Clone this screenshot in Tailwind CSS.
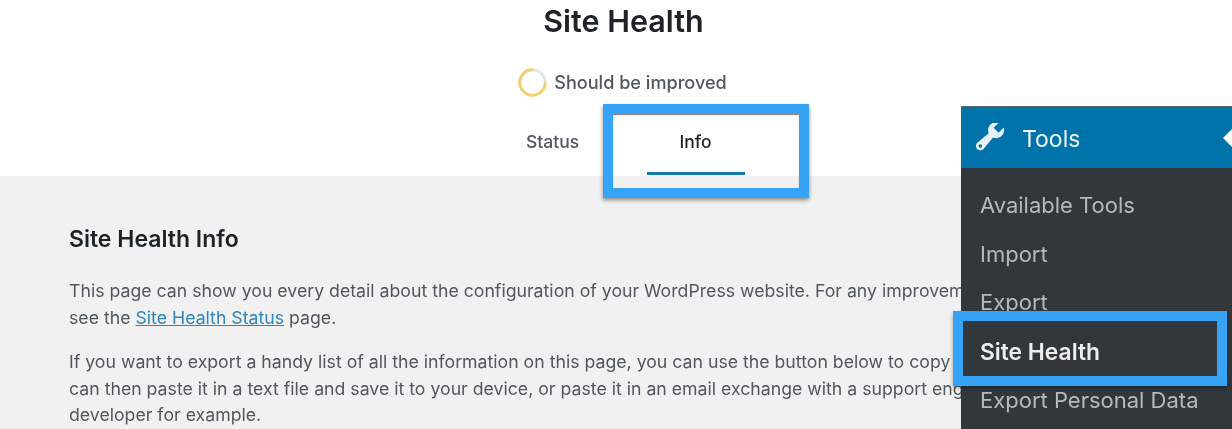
<!DOCTYPE html>
<html lang="en">
<head>
    <meta charset="UTF-8">
    <title>Site Health</title>
    <script src="https://cdn.jsdelivr.net/npm/@tailwindcss/browser@4"></script>
</head>
<body class="bg-white">
    <div class="relative w-[1232px] h-[429px] overflow-hidden font-['Inter',sans-serif] blur-[0.6px]">
        <!-- Header -->
        <header class="h-[176px] bg-white flex flex-col items-center pl-[15px]">
            <h1 class="mt-[2px] text-[30.5px] leading-[38px] font-semibold text-[#1d2327]">Site Health</h1>
            <div class="mt-[28px] ml-[-2px] flex items-center gap-[7px]">
                <svg class="w-[29px] h-[29px]" viewBox="0 0 29 29">
                    <circle cx="14.5" cy="14.5" r="12.7" fill="none" stroke="#e2e2e2" stroke-width="2.4"/>
                    <circle cx="14.5" cy="14.5" r="12.7" fill="none" stroke="#f6cf6a" stroke-width="3" stroke-dasharray="60 80"/>
                </svg>
                <span class="text-[18.1px] font-medium text-[#50575e]">Should be improved</span>
            </div>
            <nav class="mt-[26px] flex gap-[21px] ml-[-23px]">
                <a class="w-[146px] h-[52px] pt-[7px] text-center text-[17.5px] leading-[24px] font-medium text-[#50575e]">Status</a>
                <a class="w-[98px] h-[52px] pt-[7px] text-center text-[17.5px] leading-[24px] font-medium text-[#1d2327] border-b-[3px] border-[#0f78ae]">Info</a>
            </nav>
        </header>

        <!-- Content -->
        <main class="h-[253px] bg-[#f1f1f1] pl-[69px] pt-[48px] text-[17.7px] leading-[26.5px] text-[#50575e] whitespace-nowrap">
            <h2 class="text-[23px] leading-[30px] font-semibold text-[#1d2327]">Site Health Info</h2>
            <p class="mt-[24px] w-[892px] overflow-hidden">This page can show you every detail about the configuration of your WordPress website. For any improvements,<br>see the <a class="text-[#2f86bd] underline">Site Health Status</a> page.</p>
            <p class="mt-[18px] w-[892px] overflow-hidden">If you want to export a handy list of all the information on this page, you can use the button below to copy it. You<br>can then paste it in a text file and save it to your device, or paste it in an email exchange with a support engineer or<br>developer for example.</p>
        </main>

        <!-- Highlight round the Info tab -->
        <div class="absolute left-[603px] top-[104px] w-[206px] h-[94px] border-[10px] border-[#36a3f7] shadow-[0_2px_4px_rgba(0,0,0,0.45),inset_0_1px_1px_rgba(60,30,20,0.6)]"></div>

        <!-- Admin menu -->
        <aside class="absolute left-[961px] top-[106px] w-[271px] h-[323px] bg-[#32373c] text-[22px] text-[#b4b9be]">
            <div class="relative h-[62px] bg-[#0073aa] border-t border-[#5a6770] flex items-center pl-[14px] gap-[17px] text-[#eef6fa]">
                <svg class="w-[30px] h-[30px]" viewBox="1.5 3 17 16" fill="#e6f1f7">
                    <path d="M16.68 9.77c-1.34 1.34-3.3 1.67-4.95.99l-5.41 6.52c-.99.99-2.59.99-3.58 0s-.99-2.59 0-3.57l6.52-5.42c-.68-1.65-.35-3.61.99-4.95 1.28-1.28 3.12-1.62 4.72-1.06l-2.89 2.89 2.82 2.82 2.86-2.87c.53 1.58.18 3.39-1.08 4.65zM3.81 16.21c.4.39 1.04.39 1.43 0 .4-.4.4-1.04 0-1.43-.39-.4-1.03-.4-1.43 0-.39.39-.39 1.03 0 1.43z"/>
                </svg>
                <span class="mt-[4px] text-[23px]">Tools</span>
                <span class="absolute right-[-1px] top-[21px] w-0 h-0 border-y-[10px] border-y-transparent border-r-[10px] border-r-white"></span>
            </div>
            <ul class="pt-[13px] pl-[19px]">
                <li class="h-[49px] leading-[49px]">Available Tools</li>
                <li class="h-[48px] leading-[48px]">Import</li>
                <li class="h-[49px] leading-[49px]">Export</li>
                <li class="h-[49px] leading-[49px] text-[22.8px] font-semibold text-[#eeeeee]">Site Health</li>
                <li class="h-[49px] leading-[49px]">Export Personal Data</li>
            </ul>
        </aside>

        <!-- Highlight round the Site Health item -->
        <div class="absolute left-[953px] top-[311px] w-[274px] h-[75px] border-[10px] border-[#36a3f7] shadow-[0_2px_4px_rgba(0,0,0,0.35)]"></div>
    </div>
</body>
</html>
